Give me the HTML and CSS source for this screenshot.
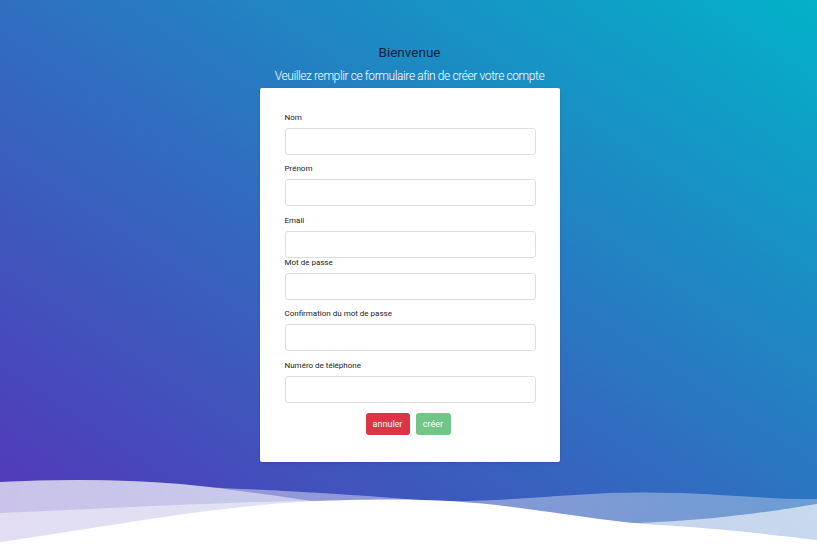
FILE: index.html
```html
<!DOCTYPE html>
<html lang="fr">
<head>
<meta charset="utf-8">
<title>Inscription</title>
<link rel="stylesheet" href="styles.css">
</head>
<body>
<div class="page">
  <svg class="waves" viewBox="0 444 817 100" width="817" height="100" preserveAspectRatio="none" aria-hidden="true">
    <defs>
      <linearGradient id="w1" x1="0" y1="0" x2="1" y2="0">
        <stop offset="0" stop-color="#ffffff" stop-opacity="0.47"/>
        <stop offset="0.5" stop-color="#ffffff" stop-opacity="0.4"/>
        <stop offset="1" stop-color="#ffffff" stop-opacity="0.3"/>
      </linearGradient>
      <linearGradient id="w2" x1="0" y1="0" x2="1" y2="0">
        <stop offset="0" stop-color="#ffffff" stop-opacity="0.42"/>
        <stop offset="1" stop-color="#ffffff" stop-opacity="0.62"/>
      </linearGradient>
    </defs>
    <path d="M0,482 C60,479 120,479 180,484 C200,486 215,488 230,488.5 C300,491 370,496 420,500 C480,504 540,496 610,493 C700,490 760,500 817,499 L817,544 L0,544 Z" fill="url(#w1)"/>
    <path d="M0,482 C60,479 120,479 180,484 C240,490 290,498 340,505 C420,514 520,520 640,523 C720,520 780,510 817,504 L817,544 L0,544 Z" fill="url(#w2)"/>
    <path d="M0,513 C100,509 200,503 300,501 C380,500 430,504 480,510 L480,544 L0,544 Z" fill="#ffffff" fill-opacity="0.45"/>
    <path d="M0,542 C100,528 200,508 300,502 C400,497 460,500 520,508 C580,516 620,523 660,525 C740,530 790,537 817,540 L817,544 L0,544 Z" fill="#ffffff"/>
  </svg>

  <main class="content">
    <h1 class="title">Bienvenue</h1>
    <p class="subtitle">Veuillez remplir ce formulaire afin de créer votre compte</p>
    <form class="card">
      <div class="field">
        <label class="label" for="nom">Nom</label>
        <input class="input" id="nom" type="text">
      </div>
      <div class="field">
        <label class="label" for="prenom">Prénom</label>
        <input class="input" id="prenom" type="text">
      </div>
      <div class="field field-tight">
        <label class="label" for="email">Email</label>
        <input class="input" id="email" type="email">
      </div>
      <div class="field">
        <label class="label" for="mdp">Mot de passe</label>
        <input class="input" id="mdp" type="password">
      </div>
      <div class="field">
        <label class="label" for="conf">Confirmation du mot de passe</label>
        <input class="input" id="conf" type="password">
      </div>
      <div class="field">
        <label class="label" for="tel">Numéro de téléphone</label>
        <input class="input" id="tel" type="tel">
      </div>
      <div class="actions">
        <button type="button" class="btn btn-cancel">annuler</button>
        <button type="button" class="btn btn-create">créer</button>
      </div>
    </form>
  </main>
</div>
</body>
</html>
```
FILE: styles.css
```css
* { box-sizing: border-box; }

html, body {
  margin: 0;
  padding: 0;
}

body {
  width: 817px;
  height: 544px;
  overflow: hidden;
  font-family: Roboto, "Noto Sans", sans-serif;
}

.page {
  position: relative;
  width: 817px;
  height: 544px;
  background: linear-gradient(to top right, #5534b8 0%, #2f6fc0 50%, #02b2c8 100%);
  overflow: hidden;
}

.waves {
  position: absolute;
  left: 0;
  bottom: 0;
  display: block;
}

.content {
  position: relative;
  display: flex;
  flex-direction: column;
  align-items: center;
  padding-top: 43px;
  padding-left: 2px;
}

.title {
  margin: 0;
  font-size: 13.5px;
  line-height: 18px;
  font-weight: 400;
  color: #0f1d3c;
}

.subtitle {
  margin: 7px 0 4px;
  font-size: 12px;
  line-height: 16px;
  font-weight: 300;
  color: #ffffff;
  letter-spacing: -0.4px;
}

.card {
  width: 300px;
  height: 374px;
  background: #ffffff;
  border-radius: 2px;
  padding: 25px 24px 27px 25px;
  display: flex;
  flex-direction: column;
  box-shadow: 0 1px 3px rgba(0, 0, 0, 0.15);
}

.field {
  display: flex;
  flex-direction: column;
  margin-bottom: 9.4px;
}

.field-tight {
  margin-bottom: 0;
}

.label {
  font-size: 8px;
  line-height: 10px;
  color: #222222;
  margin-bottom: 5px;
}

.input {
  width: 251px;
  height: 27px;
  border: 1px solid #dedede;
  border-radius: 3px;
  background: #ffffff;
  font: inherit;
  padding: 0 6px;
}

.actions {
  display: flex;
  justify-content: center;
  gap: 6px;
  padding-right: 4px;
  margin-top: 0.6px;
}

.btn {
  height: 22px;
  border: none;
  border-radius: 3px;
  font-family: Roboto, "Noto Sans", sans-serif;
  font-size: 9px;
  color: #ffffff;
  padding: 0 7px;
  cursor: pointer;
}

.btn-cancel {
  width: 44px;
  background: #dc3545;
}

.btn-create {
  width: 35px;
  background: #72c587;
}
```
